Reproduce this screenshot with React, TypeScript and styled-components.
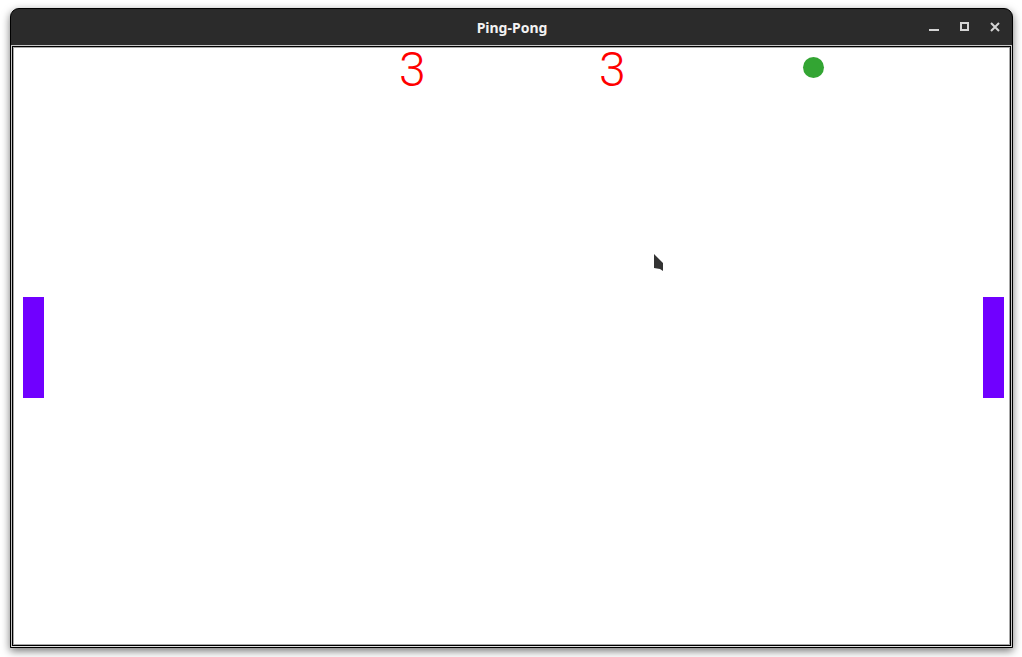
import React from 'react';
import styled, { createGlobalStyle } from 'styled-components';

const GlobalStyle = createGlobalStyle`
  html, body {
    margin: 0;
    padding: 0;
    background: #ffffff;
  }
  body {
    font-family: 'Noto Sans', 'DejaVu Sans', sans-serif;
  }
`;

const StyledPage = styled.div`
  width: 1022px;
  height: 657px;
  padding: 8px 0 0 10px;
  box-sizing: border-box;
  overflow: hidden;
`;

const StyledWindow = styled.div`
  width: 1003px;
  height: 640px;
  box-sizing: border-box;
  border: 1px solid #000;
  border-radius: 9px 9px 0 0;
  background-color: #2b2b2b;
  box-shadow: 0 3px 8px rgba(0, 0, 0, 0.55);
  display: flex;
  flex-direction: column;
  overflow: hidden;
`;

const StyledTitleBar = styled.div`
  height: 36px;
  flex-shrink: 0;
  display: grid;
  grid-template-columns: 1fr auto 1fr;
  align-items: center;
  color: #f2f2f2;
`;

const StyledTitle = styled.div`
  grid-column: 2;
  font-size: 14px;
  font-weight: 700;
  padding-left: 1px;
`;

const StyledControls = styled.div`
  grid-column: 3;
  justify-self: end;
  display: flex;
  align-items: center;
  padding-right: 3px;
`;

const StyledControlButton = styled.div`
  width: 30px;
  height: 36px;
  display: flex;
  align-items: center;
  justify-content: center;
  color: #d4d4d4;
`;

const StyledFrameOuter = styled.div`
  flex: 1;
  display: flex;
  border: 1px solid #c8c8c8;
  border-bottom-color: #e0e0e0;
`;

const StyledFrameInner = styled.div`
  flex: 1;
  display: flex;
  border: 1px solid #000;
`;

const StyledCanvas = styled.div`
  flex: 1;
  position: relative;
  background: #ffffff;
  border: 1px solid #a8a8a8;
`;

const StyledPaddle = styled.div<{ $left: number; $top: number }>`
  position: absolute;
  left: ${(p) => p.$left}px;
  top: ${(p) => p.$top}px;
  width: 21px;
  height: 101px;
  background-color: #7000ff;
`;

const StyledBall = styled.div<{ $left: number; $top: number }>`
  position: absolute;
  left: ${(p) => p.$left}px;
  top: ${(p) => p.$top}px;
  width: 21px;
  height: 21px;
  border-radius: 50%;
  background-color: #33a533;
`;

const StyledScore = styled.div<{ $left: number }>`
  position: absolute;
  left: ${(p) => p.$left}px;
  top: -4px;
  font-family: Roboto, 'Noto Sans', sans-serif;
  font-weight: 300;
  font-size: 48px;
  line-height: 52px;
  color: #ff0000;
`;

const StyledCursor = styled.svg`
  position: absolute;
  left: 640px;
  top: 206px;
`;

const MinimizeIcon = () => (
  <svg width="12" height="12" viewBox="0 0 12 12">
    <rect x="1" y="8" width="10" height="2" fill="currentColor" />
  </svg>
);

const MaximizeIcon = () => (
  <svg width="12" height="12" viewBox="0 0 12 12">
    <rect x="3" y="2" width="7" height="7" fill="none" stroke="currentColor" strokeWidth="2" />
  </svg>
);

const CloseIcon = () => (
  <svg width="12" height="12" viewBox="0 0 12 12">
    <path d="M3 2 L11 10 M11 2 L3 10" stroke="currentColor" strokeWidth="2" />
  </svg>
);

export default function App() {
  return (
    <>
      <GlobalStyle />
      <StyledPage>
        <StyledWindow>
          <StyledTitleBar>
            <StyledTitle>Ping-Pong</StyledTitle>
            <StyledControls>
              <StyledControlButton>
                <MinimizeIcon />
              </StyledControlButton>
              <StyledControlButton>
                <MaximizeIcon />
              </StyledControlButton>
              <StyledControlButton>
                <CloseIcon />
              </StyledControlButton>
            </StyledControls>
          </StyledTitleBar>
          <StyledFrameOuter>
            <StyledFrameInner>
              <StyledCanvas>
                <StyledScore $left={385}>3</StyledScore>
                <StyledScore $left={585}>3</StyledScore>
                <StyledBall $left={789} $top={9} />
                <StyledPaddle $left={9} $top={249} />
                <StyledPaddle $left={969} $top={249} />
                <StyledCursor width="10" height="18" viewBox="0 0 10 18">
                  <polygon points="0,0 9,9 9,17 6,15 0,14" fill="#333333" />
                </StyledCursor>
              </StyledCanvas>
            </StyledFrameInner>
          </StyledFrameOuter>
        </StyledWindow>
      </StyledPage>
    </>
  );
}
